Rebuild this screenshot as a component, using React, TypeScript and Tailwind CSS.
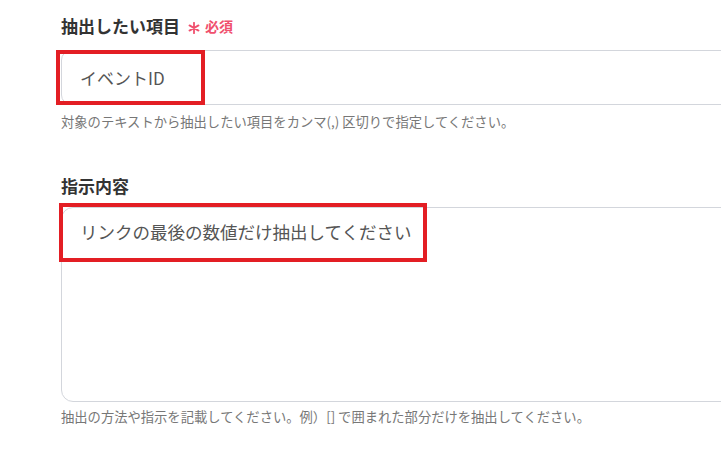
const fieldFont = { fontFamily: '"Noto Sans CJK JP", "Noto Sans", sans-serif' }

export default function App() {
  return (
    <div
      className="w-[721px] h-[464px] overflow-hidden bg-white pl-[61px] pt-[14px]"
      style={fieldFont}
    >
      <div className="w-[720px] flex flex-col">

        {/* ── 抽出したい項目 ─────────────── */}
        <div className="flex items-center h-[24px]">
          <span className="text-[17px] font-bold text-[#333] leading-[24px]">抽出したい項目</span>
          <svg className="ml-[8px] mt-[3px] w-[12px] h-[12px] text-[#f0506e]" viewBox="0 0 12 12" fill="none" stroke="currentColor" strokeWidth="1.8" strokeLinecap="round">
            <path d="M6 0.8v10.4M1.5 3.4l9 5.2M10.5 3.4l-9 5.2" />
          </svg>
          <span className="ml-[5px] text-[14px] font-bold text-[#f0506e] leading-[24px]">必須</span>
        </div>

        <div className="relative mt-[12px]">
          <div className="h-[55px] rounded-l-[10px] border border-[#d3d6dc] bg-white flex items-center pl-[18px] text-[17px] text-[#555]">
            イベントID
          </div>
          <div className="absolute left-[-5px] top-0 w-[149px] h-[55px] border-[4px] border-[#e31e24]" />
        </div>

        <p className="mt-[7px] text-[13.3px] leading-[20px] text-[#777]">
          対象のテキストから抽出したい項目をカンマ(,) 区切りで指定してください。
        </p>

        {/* ── 指示内容 ─────────────── */}
        <div className="mt-[42px] h-[24px] flex items-center">
          <span className="text-[17px] font-bold text-[#333] leading-[24px]">指示内容</span>
        </div>

        <div className="relative mt-[9px]">
          <div className="h-[195px] rounded-l-[12px] border border-[#d3d6dc] bg-white pl-[18px] pt-[11px] text-[17.5px] leading-[26px] text-[#555]">
            リンクの最後の数値だけ抽出してください
          </div>
          <div className="absolute left-[-2px] top-[-4px] w-[368px] h-[59px] border-[4px] border-[#e31e24]" />
        </div>

        <p className="mt-[5px] text-[13.3px] leading-[20px] text-[#777]">
          抽出の方法や指示を記載してください。例）[] で囲まれた部分だけを抽出してください。
        </p>
      </div>
    </div>
  )
}
